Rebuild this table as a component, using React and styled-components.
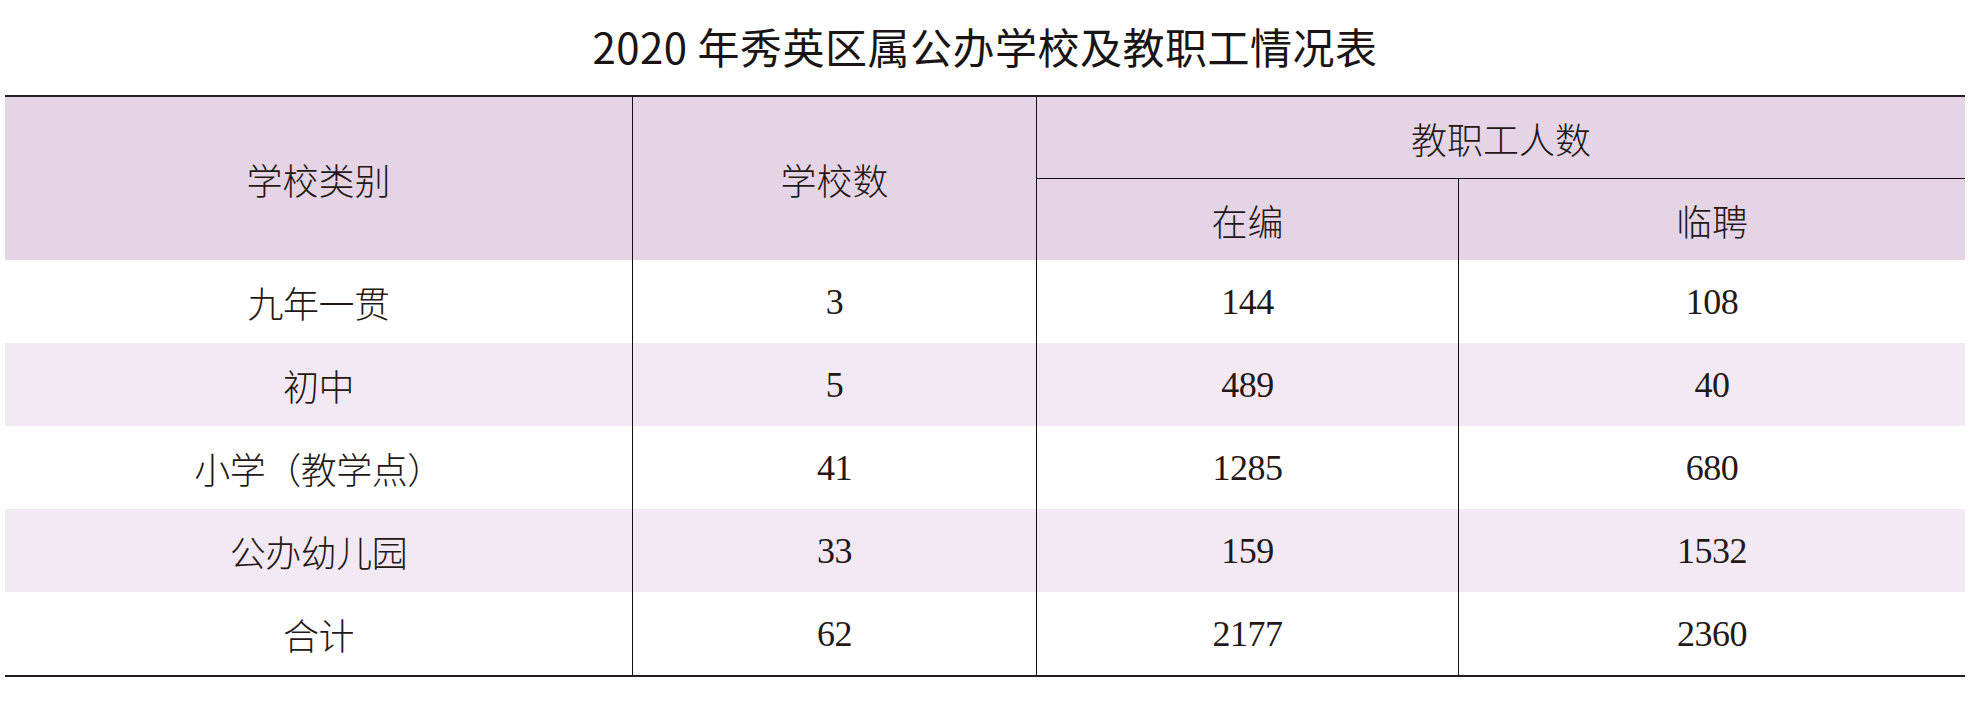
import React from "react";
import styled, { createGlobalStyle } from "styled-components";

const rows = [
  { name: "九年一贯", schools: "3", staff: "144", temp: "108" },
  { name: "初中", schools: "5", staff: "489", temp: "40" },
  { name: "小学（教学点）", schools: "41", staff: "1285", temp: "680" },
  { name: "公办幼儿园", schools: "33", staff: "159", temp: "1532" },
  { name: "合计", schools: "62", staff: "2177", temp: "2360" },
];

const App = () => {
  return (
    <>
      <GlobalStyle />
      <Page>
        <Title>2020 年秀英区属公办学校及教职工情况表</Title>
        <Table>
          <HeadCell $rowSpan={2}>学校类别</HeadCell>
          <HeadCell $rowSpan={2} $line>
            学校数
          </HeadCell>
          <HeadCell $colSpan={2} $line $under>
            教职工人数
          </HeadCell>
          <HeadCell $line>在编</HeadCell>
          <HeadCell $line>临聘</HeadCell>
          {rows.map((row, i) => (
            <React.Fragment key={row.name}>
              <Cell $shaded={i % 2 === 1}>{row.name}</Cell>
              <Cell $shaded={i % 2 === 1} $line>
                {row.schools}
              </Cell>
              <Cell $shaded={i % 2 === 1} $line>
                {row.staff}
              </Cell>
              <Cell $shaded={i % 2 === 1} $line>
                {row.temp}
              </Cell>
            </React.Fragment>
          ))}
        </Table>
      </Page>
    </>
  );
};

export default App;

const GlobalStyle = createGlobalStyle`
  html, body {
    margin: 0;
    padding: 0;
    background: #ffffff;
  }
`;

const Page = styled.div`
  width: 1976px;
  height: 712px;
  padding: 0 11px 0 5px;
  box-sizing: border-box;
  color: #231815;
`;

const Title = styled.h1`
  margin: 0;
  padding-top: 25px;
  height: 70px;
  box-sizing: border-box;
  font-family: "Noto Sans CJK SC", "Noto Sans", sans-serif;
  font-weight: 400;
  font-size: 42px;
  line-height: 42px;
  text-align: center;
  letter-spacing: 0.5px;
  color: #1a1414;
`;

const Table = styled.div`
  display: grid;
  grid-template-columns: 627px 404px 422px 507px;
  grid-template-rows: 82px 81px;
  grid-auto-rows: 83px;
  border-top: 2px solid #231f20;
  border-bottom: 2px solid #231f20;
  margin-top: 25px;
  font-family: "Liberation Serif", "Noto Sans CJK SC", serif;
  font-weight: 300;
  font-size: 36px;
`;

const BaseCell = styled.div`
  display: flex;
  align-items: center;
  justify-content: center;
  box-sizing: border-box;
  border-left: ${(p) => (p.$line ? "1px solid #111" : "none")};
`;

const HeadCell = styled(BaseCell)`
  background: #e4d4e6;
  grid-row: ${(p) => (p.$rowSpan ? `span ${p.$rowSpan}` : "auto")};
  grid-column: ${(p) => (p.$colSpan ? `span ${p.$colSpan}` : "auto")};
  border-bottom: ${(p) => (p.$under ? "1px solid #111" : "none")};
`;

const Cell = styled(BaseCell)`
  background: ${(p) => (p.$shaded ? "#f3e9f4" : "#ffffff")};
  letter-spacing: -0.5px;
`;
